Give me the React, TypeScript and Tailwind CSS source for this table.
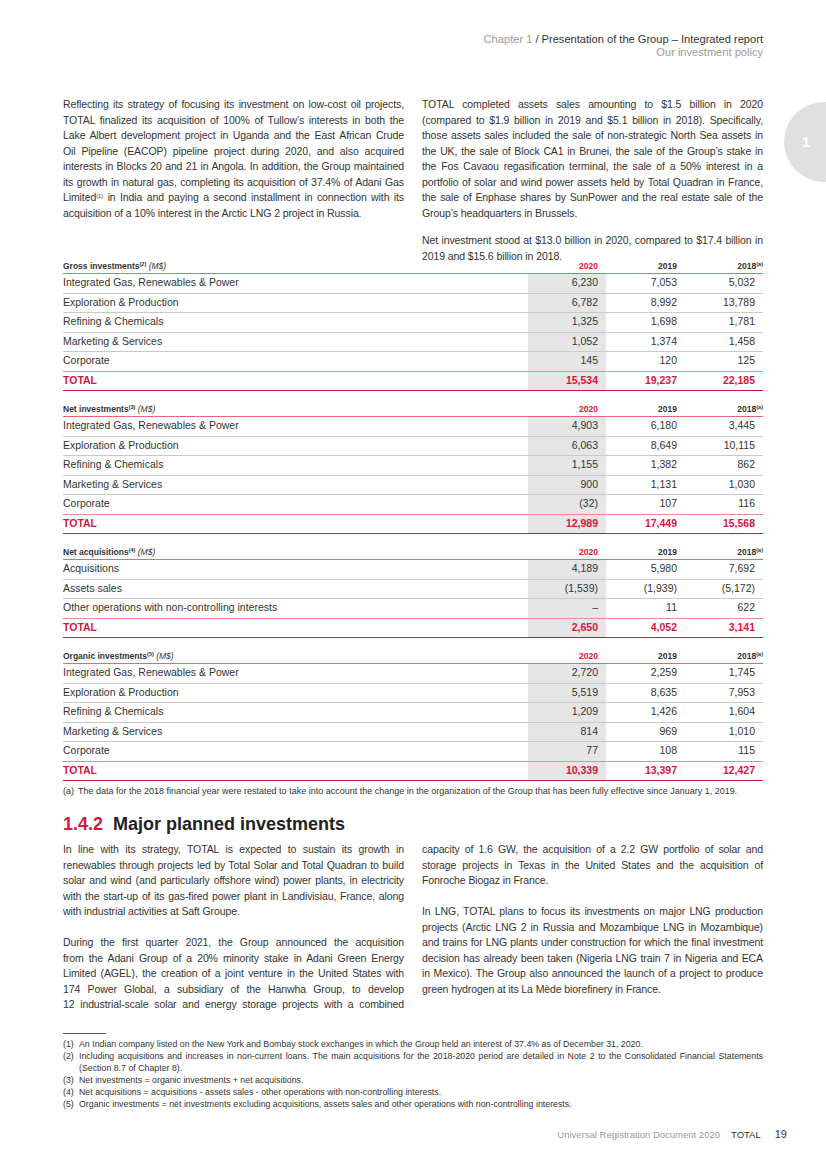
import React from "react";

type Row = [string, string, string, string];
type Table = { title: string; sup: string; rows: Row[]; total: [string, string, string] };

const tables: Table[] = [
  {
    title: "Gross investments",
    sup: "(2)",
    rows: [
      ["Integrated Gas, Renewables & Power", "6,230", "7,053", "5,032"],
      ["Exploration & Production", "6,782", "8,992", "13,789"],
      ["Refining & Chemicals", "1,325", "1,698", "1,781"],
      ["Marketing & Services", "1,052", "1,374", "1,458"],
      ["Corporate", "145", "120", "125"],
    ],
    total: ["15,534", "19,237", "22,185"],
  },
  {
    title: "Net investments",
    sup: "(3)",
    rows: [
      ["Integrated Gas, Renewables & Power", "4,903", "6,180", "3,445"],
      ["Exploration & Production", "6,063", "8,649", "10,115"],
      ["Refining & Chemicals", "1,155", "1,382", "862"],
      ["Marketing & Services", "900", "1,131", "1,030"],
      ["Corporate", "(32)", "107", "116"],
    ],
    total: ["12,989", "17,449", "15,568"],
  },
  {
    title: "Net acquisitions",
    sup: "(4)",
    rows: [
      ["Acquisitions", "4,189", "5,980", "7,692"],
      ["Assets sales", "(1,539)", "(1,939)", "(5,172)"],
      ["Other operations with non-controlling interests", "–", "11", "622"],
    ],
    total: ["2,650", "4,052", "3,141"],
  },
  {
    title: "Organic investments",
    sup: "(5)",
    rows: [
      ["Integrated Gas, Renewables & Power", "2,720", "2,259", "1,745"],
      ["Exploration & Production", "5,519", "8,635", "7,953"],
      ["Refining & Chemicals", "1,209", "1,426", "1,604"],
      ["Marketing & Services", "814", "969", "1,010"],
      ["Corporate", "77", "108", "115"],
    ],
    total: ["10,339", "13,397", "12,427"],
  },
];

function DataTable({ t, first }: { t: Table; first: boolean }) {
  return (
    <div className={first ? "-mt-[5px]" : "mt-[11px]"}>
      <div className="flex h-[15px] items-center border-b border-[#e3667f] text-[8.5px] font-bold">
        <div className="flex-1 text-[#333]">
          {t.title}
          <sup className="text-[5.5px] font-bold">{t.sup}</sup>{" "}
          <span className="font-normal italic">(M$)</span>
        </div>
        <div className="w-[78px] pr-[8px] text-right text-[#d3173f]">2020</div>
        <div className="w-[79px] pr-[8px] text-right text-[#333]">2019</div>
        <div className="w-[78px] text-right text-[#333]">
          2018<sup className="text-[5.5px] font-bold">(a)</sup>
        </div>
      </div>
      {t.rows.map((r, i) => (
        <div
          key={i}
          className={
            "flex h-[19.5px] items-stretch border-b text-[10.5px] text-[#333] " +
            (i === t.rows.length - 1 ? "border-[#e88a9c]" : "border-[#c9c9c9]")
          }
        >
          <div className="flex flex-1 items-center">{r[0]}</div>
          <div className="flex w-[78px] items-center justify-end bg-[#e6e6e6] pr-[8px]">{r[1]}</div>
          <div className="flex w-[79px] items-center justify-end pr-[8px]">{r[2]}</div>
          <div className="flex w-[78px] items-center justify-end pr-[8px]">{r[3]}</div>
        </div>
      ))}
      <div className="flex h-[19.5px] items-stretch border-b border-[#c8163c] text-[10.5px] font-bold text-[#d3173f]">
        <div className="flex flex-1 items-center">TOTAL</div>
        <div className="flex w-[78px] items-center justify-end bg-[#e6e6e6] pr-[8px]">{t.total[0]}</div>
        <div className="flex w-[79px] items-center justify-end pr-[8px]">{t.total[1]}</div>
        <div className="flex w-[78px] items-center justify-end pr-[8px]">{t.total[2]}</div>
      </div>
    </div>
  );
}

function Para({ lines, justifyLast = false, className = "" }: { lines: React.ReactNode[]; justifyLast?: boolean; className?: string }) {
  return (
    <div className={className}>
      {lines.map((l, i) => (
        <div
          key={i}
          className={
            i < lines.length - 1 || justifyLast ? "text-justify [text-align-last:justify]" : "text-left"
          }
        >
          {l}
        </div>
      ))}
    </div>
  );
}

export default function App() {
  return (
    <div className="relative flex h-[1168px] w-[826px] flex-col overflow-hidden bg-white px-[63px] pb-[26px] font-['Liberation_Sans',Arial,sans-serif] text-[#333]">
      {/* chapter tab */}
      <div className="absolute right-0 top-[102px] flex h-[80px] w-[42px] items-center justify-center rounded-l-full bg-[#e0e0e0] pl-[2px] text-[14px] font-bold text-white">
        1
      </div>

      {/* header */}
      <div className="pt-[33px] text-right text-[11.1px] leading-[13px]">
        <div>
          <span className="text-[#9a9a9a]">Chapter 1</span>
          <span className="text-[#333]"> / Presentation of the Group – Integrated report</span>
        </div>
        <div className="text-[#9a9a9a]">Our investment policy</div>
      </div>

      {/* top paragraphs */}
      <div className="mt-[38px] grid grid-cols-2 gap-x-[18px] text-[10.5px] leading-[15.5px] tracking-[-0.1px]">
        <Para
          lines={[
            "Reflecting its strategy of focusing its investment on low-cost oil projects,",
            "TOTAL finalized its acquisition of 100% of Tullow’s interests in both the",
            "Lake Albert development project in Uganda and the East African Crude",
            "Oil Pipeline (EACOP) pipeline project during 2020, and also acquired",
            "interests in Blocks 20 and 21 in Angola. In addition, the Group maintained",
            "its growth in natural gas, completing its acquisition of 37.4% of Adani Gas",
            <>
              Limited<sup className="text-[6px]">(1)</sup> in India and paying a second installment in connection with its
            </>,
            "acquisition of a 10% interest in the Arctic LNG 2 project in Russia.",
          ]}
        />
        <div>
          <Para
            lines={[
              "TOTAL completed assets sales amounting to $1.5 billion in 2020",
              "(compared to $1.9 billion in 2019 and $5.1 billion in 2018). Specifically,",
              "those assets sales included the sale of non-strategic North Sea assets in",
              "the UK, the sale of Block CA1 in Brunei, the sale of the Group’s stake in",
              "the Fos Cavaou regasification terminal, the sale of a 50% interest in a",
              "portfolio of solar and wind power assets held by Total Quadran in France,",
              "the sale of Enphase shares by SunPower and the real estate sale of the",
              "Group’s headquarters in Brussels.",
            ]}
          />
          <Para
            className="mt-[12px]"
            lines={[
              "Net investment stood at $13.0 billion in 2020, compared to $17.4 billion in",
              "2019 and $15.6 billion in 2018.",
            ]}
          />
        </div>
      </div>

      {/* tables */}
      {tables.map((t, i) => (
        <DataTable key={i} t={t} first={i === 0} />
      ))}

      <div className="mt-[5px] flex text-[9px] leading-[11px]">
        <span className="w-[15px] shrink-0">(a)</span>
        <span>
          The data for the 2018 financial year were restated to take into account the change in the organization of
          the Group that has been fully effective since January 1, 2019.
        </span>
      </div>

      {/* heading */}
      <h2 className="mt-[16px] text-[18px] font-bold leading-[22px] text-[#222]">
        <span className="text-[#d3173f]">1.4.2</span>
        <span className="ml-[10px]">Major planned investments</span>
      </h2>

      <div className="mt-[7px] grid grid-cols-2 gap-x-[18px] text-[10.5px] leading-[15.5px] tracking-[-0.1px]">
        <div>
          <Para
            lines={[
              "In line with its strategy, TOTAL is expected to sustain its growth in",
              "renewables through projects led by Total Solar and Total Quadran to build",
              "solar and wind (and particularly offshore wind) power plants, in electricity",
              "with the start-up of its gas-fired power plant in Landivisiau, France, along",
              "with industrial activities at Saft Groupe.",
            ]}
          />
          <Para
            className="mt-[15.5px]"
            justifyLast
            lines={[
              "During the first quarter 2021, the Group announced the acquisition",
              "from the Adani Group of a 20% minority stake in Adani Green Energy",
              "Limited (AGEL), the creation of a joint venture in the United States with",
              "174 Power Global, a subsidiary of the Hanwha Group, to develop",
              "12 industrial-scale solar and energy storage projects with a combined",
            ]}
          />
        </div>
        <div>
          <Para
            lines={[
              "capacity of 1.6 GW, the acquisition of a 2.2 GW portfolio of solar and",
              "storage projects in Texas in the United States and the acquisition of",
              "Fonroche Biogaz in France.",
            ]}
          />
          <Para
            className="mt-[15.5px]"
            lines={[
              "In LNG, TOTAL plans to focus its investments on major LNG production",
              "projects (Arctic LNG 2 in Russia and Mozambique LNG in Mozambique)",
              "and trains for LNG plants under construction for which the final investment",
              "decision has already been taken (Nigeria LNG train 7 in Nigeria and ECA",
              "in Mexico). The Group also announced the launch of a project to produce",
              "green hydrogen at its La Mède biorefinery in France.",
            ]}
          />
        </div>
      </div>

      {/* footnotes */}
      <div className="mt-auto">
        <div className="h-px w-[43px] bg-[#555]" />
        <div className="mt-[4px] text-[8.8px] leading-[12px]">
          {[
            [
              "(1)",
              "An Indian company listed on the New York and Bombay stock exchanges in which the Group held an interest of 37.4% as of December 31, 2020.",
            ],
            [
              "(2)",
              "Including acquisitions and increases in non-current loans. The main acquisitions for the 2018-2020 period are detailed in Note 2 to the Consolidated Financial Statements (Section 8.7 of Chapter 8).",
            ],
            ["(3)", "Net investments = organic investments + net acquisitions."],
            [
              "(4)",
              "Net acquisitions = acquisitions - assets sales - other operations with non-controlling interests.",
            ],
            [
              "(5)",
              "Organic investments = net investments excluding acquisitions, assets sales and other operations with non-controlling interests.",
            ],
          ].map(([n, txt]) => (
            <div key={n} className="flex">
              <span className="w-[16px] shrink-0">{n}</span>
              <span className="text-justify">{txt}</span>
            </div>
          ))}
        </div>

        {/* footer */}
        <div className="-mr-[24px] mt-[17px] flex items-baseline justify-end text-[9.5px] leading-[14px]">
          <span className="text-[#9a9a9a]">Universal Registration Document 2020</span>
          <span className="ml-[11px] text-[#333]">TOTAL</span>
          <span className="ml-[14px] text-[11px] text-[#333]">19</span>
        </div>
      </div>
    </div>
  );
}
